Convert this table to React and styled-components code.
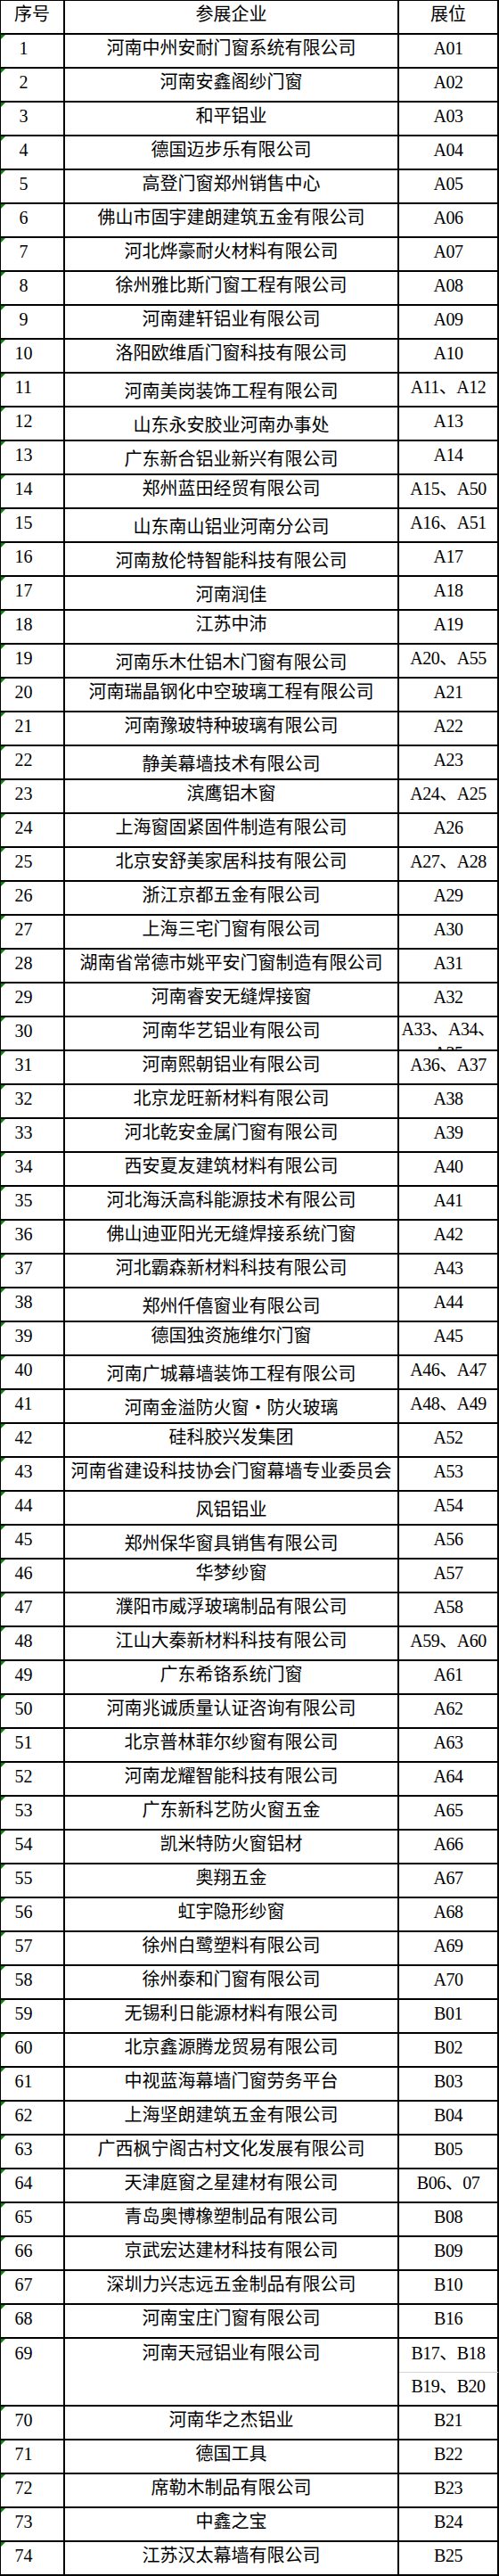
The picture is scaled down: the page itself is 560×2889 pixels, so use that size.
import React from "react";
import styled, { createGlobalStyle, css } from "styled-components";

const GlobalStyle = createGlobalStyle`
  html, body {
    margin: 0;
    padding: 0;
    background: #ffffff;
  }
  body {
    font-family: "Liberation Serif", "Noto Sans CJK SC", serif;
    color: #000000;
  }
`;

const Sheet = styled.div`
  display: grid;
  grid-template-columns: 72px 375px 112px;
  grid-auto-rows: 38px;
  width: 560px;
  box-sizing: border-box;
  border-left: 1px solid #000;
  border-top: 1px solid #000;
  font-family: "Liberation Serif", "Noto Sans CJK SC", serif;
  font-size: 20px;
  line-height: 20px;
  color: #000;
`;

const Cell = styled.div`
  position: relative;
  box-sizing: border-box;
  display: flex;
  align-items: center;
  justify-content: center;
  padding-bottom: 6px;
  border-right: 2px solid #000;
  border-bottom: ${(p) => (p.$soft ? "1px solid #d4d4d4" : "2px solid #000")};
  white-space: nowrap;
  ${(p) =>
    p.$span &&
    css`
      grid-row: span ${p.$span};
      align-items: flex-start;
      padding-top: 6px;
      padding-bottom: 0;
    `}
`;

const HeadCell = styled(Cell)``;

const NumCell = styled(Cell)`
  padding-right: 19px;
  &::before {
    content: "";
    position: absolute;
    left: 0;
    top: 0;
    width: 0;
    height: 0;
    border-top: 5px solid #008a00;
    border-right: 5px solid transparent;
  }
`;

const NameCell = styled(Cell)`
  ${(p) =>
    p.$low &&
    css`
      padding-top: 4px;
      padding-bottom: 0;
    `}
`;

const BoothCell = styled(Cell)`
  letter-spacing: -0.5px;
  ${(p) =>
    p.$wrap &&
    css`
      white-space: normal;
      overflow: hidden;
      align-items: flex-start;
      text-align: center;
      line-height: 27px;
      padding: 0;
    `}
`;

const rows = [
  [1, "河南中州安耐门窗系统有限公司", "A01"],
  [2, "河南安鑫阁纱门窗", "A02"],
  [3, "和平铝业", "A03"],
  [4, "德国迈步乐有限公司", "A04"],
  [5, "高登门窗郑州销售中心", "A05"],
  [6, "佛山市固宇建朗建筑五金有限公司", "A06"],
  [7, "河北烨豪耐火材料有限公司", "A07"],
  [8, "徐州雅比斯门窗工程有限公司", "A08"],
  [9, "河南建轩铝业有限公司", "A09"],
  [10, "洛阳欧维盾门窗科技有限公司", "A10"],
  [11, "河南美岗装饰工程有限公司", "A11、A12", "low"],
  [12, "山东永安胶业河南办事处", "A13", "low"],
  [13, "广东新合铝业新兴有限公司", "A14", "low"],
  [14, "郑州蓝田经贸有限公司", "A15、A50"],
  [15, "山东南山铝业河南分公司", "A16、A51", "low"],
  [16, "河南敖伦特智能科技有限公司", "A17", "low"],
  [17, "河南润佳", "A18", "low"],
  [18, "江苏中沛", "A19"],
  [19, "河南乐木仕铝木门窗有限公司", "A20、A55", "low"],
  [20, "河南瑞晶钢化中空玻璃工程有限公司", "A21"],
  [21, "河南豫玻特种玻璃有限公司", "A22"],
  [22, "静美幕墙技术有限公司", "A23", "low"],
  [23, "滨鹰铝木窗", "A24、A25"],
  [24, "上海窗固紧固件制造有限公司", "A26"],
  [25, "北京安舒美家居科技有限公司", "A27、A28"],
  [26, "浙江京都五金有限公司", "A29"],
  [27, "上海三宅门窗有限公司", "A30"],
  [28, "湖南省常德市姚平安门窗制造有限公司", "A31"],
  [29, "河南睿安无缝焊接窗", "A32"],
  [30, "河南华艺铝业有限公司", "A33、A34、A35", "wrap"],
  [31, "河南熙朝铝业有限公司", "A36、A37"],
  [32, "北京龙旺新材料有限公司", "A38"],
  [33, "河北乾安金属门窗有限公司", "A39"],
  [34, "西安夏友建筑材料有限公司", "A40"],
  [35, "河北海沃高科能源技术有限公司", "A41"],
  [36, "佛山迪亚阳光无缝焊接系统门窗", "A42"],
  [37, "河北霸森新材料科技有限公司", "A43"],
  [38, "郑州仟僖窗业有限公司", "A44", "low"],
  [39, "德国独资施维尔门窗", "A45"],
  [40, "河南广城幕墙装饰工程有限公司", "A46、A47", "low"],
  [41, "河南金溢防火窗・防火玻璃", "A48、A49", "low"],
  [42, "硅科胶兴发集团", "A52"],
  [43, "河南省建设科技协会门窗幕墙专业委员会", "A53"],
  [44, "风铝铝业", "A54", "low"],
  [45, "郑州保华窗具销售有限公司", "A56", "low"],
  [46, "华梦纱窗", "A57"],
  [47, "濮阳市威浮玻璃制品有限公司", "A58"],
  [48, "江山大秦新材料科技有限公司", "A59、A60"],
  [49, "广东希铬系统门窗", "A61"],
  [50, "河南兆诚质量认证咨询有限公司", "A62"],
  [51, "北京普林菲尔纱窗有限公司", "A63"],
  [52, "河南龙耀智能科技有限公司", "A64"],
  [53, "广东新科艺防火窗五金", "A65"],
  [54, "凯米特防火窗铝材", "A66"],
  [55, "奥翔五金", "A67"],
  [56, "虹宇隐形纱窗", "A68"],
  [57, "徐州白鹭塑料有限公司", "A69"],
  [58, "徐州泰和门窗有限公司", "A70"],
  [59, "无锡利日能源材料有限公司", "B01"],
  [60, "北京鑫源腾龙贸易有限公司", "B02"],
  [61, "中视蓝海幕墙门窗劳务平台", "B03"],
  [62, "上海坚朗建筑五金有限公司", "B04"],
  [63, "广西枫宁阁古村文化发展有限公司", "B05"],
  [64, "天津庭窗之星建材有限公司", "B06、07"],
  [65, "青岛奥博橡塑制品有限公司", "B08"],
  [66, "京武宏达建材科技有限公司", "B09"],
  [67, "深圳力兴志远五金制品有限公司", "B10"],
  [68, "河南宝庄门窗有限公司", "B16"],
  [69, "河南天冠铝业有限公司", ["B17、B18", "B19、B20"]],
  [70, "河南华之杰铝业", "B21"],
  [71, "德国工具", "B22"],
  [72, "席勒木制品有限公司", "B23"],
  [73, "中鑫之宝", "B24"],
  [74, "江苏汉太幕墙有限公司", "B25"],
];

function Row({ num, name, booth, flag }) {
  if (Array.isArray(booth)) {
    return (
      <>
        <NumCell $span={booth.length}>{num}</NumCell>
        <NameCell $span={booth.length}>{name}</NameCell>
        {booth.map((b, i) => (
          <BoothCell key={b} $soft={i < booth.length - 1}>
            {b}
          </BoothCell>
        ))}
      </>
    );
  }
  return (
    <>
      <NumCell>{num}</NumCell>
      <NameCell $low={flag === "low"}>{name}</NameCell>
      <BoothCell $wrap={flag === "wrap"}>{booth}</BoothCell>
    </>
  );
}

export default function App() {
  return (
    <>
      <GlobalStyle />
      <Sheet>
        <HeadCell>序号</HeadCell>
        <HeadCell>参展企业</HeadCell>
        <HeadCell>展位</HeadCell>
        {rows.map(([num, name, booth, flag]) => (
          <Row key={num} num={num} name={name} booth={booth} flag={flag} />
        ))}
      </Sheet>
    </>
  );
}
